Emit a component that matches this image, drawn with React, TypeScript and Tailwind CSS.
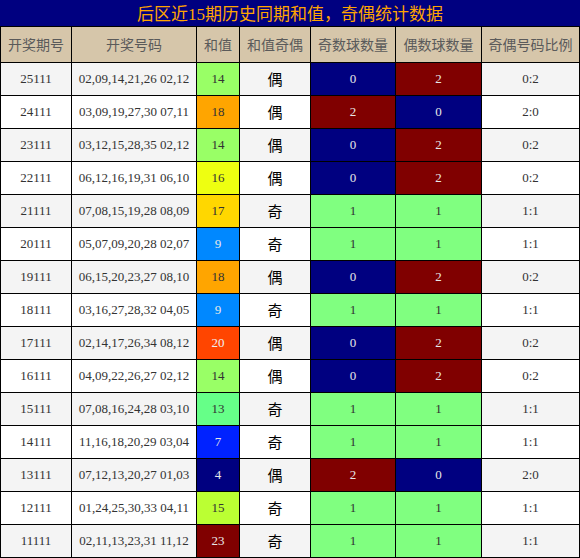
import React from "react"

type Row = [string, string, number, string, number, number, string]

const rows: Row[] = [
  ["25111", "02,09,14,21,26 02,12", 14, "偶", 0, 2, "0:2"],
  ["24111", "03,09,19,27,30 07,11", 18, "偶", 2, 0, "2:0"],
  ["23111", "03,12,15,28,35 02,12", 14, "偶", 0, 2, "0:2"],
  ["22111", "06,12,16,19,31 06,10", 16, "偶", 0, 2, "0:2"],
  ["21111", "07,08,15,19,28 08,09", 17, "奇", 1, 1, "1:1"],
  ["20111", "05,07,09,20,28 02,07", 9, "奇", 1, 1, "1:1"],
  ["19111", "06,15,20,23,27 08,10", 18, "偶", 0, 2, "0:2"],
  ["18111", "03,16,27,28,32 04,05", 9, "奇", 1, 1, "1:1"],
  ["17111", "02,14,17,26,34 08,12", 20, "偶", 0, 2, "0:2"],
  ["16111", "04,09,22,26,27 02,12", 14, "偶", 0, 2, "0:2"],
  ["15111", "07,08,16,24,28 03,10", 13, "奇", 1, 1, "1:1"],
  ["14111", "11,16,18,20,29 03,04", 7, "奇", 1, 1, "1:1"],
  ["13111", "07,12,13,20,27 01,03", 4, "偶", 2, 0, "2:0"],
  ["12111", "01,24,25,30,33 04,11", 15, "奇", 1, 1, "1:1"],
  ["11111", "02,11,13,23,31 11,12", 23, "奇", 1, 1, "1:1"],
]

// 和值 cell colours
const sumColor: Record<number, string> = {
  4: "bg-[#000080] text-[#e8e8e8]",
  7: "bg-[#0022ff] text-[#e8e8e8]",
  9: "bg-[#0088ff] text-[#e8e8e8]",
  13: "bg-[#66ff88] text-[#333]",
  14: "bg-[#99ff66] text-[#333]",
  15: "bg-[#bbff33] text-[#333]",
  16: "bg-[#eeff11] text-[#333]",
  17: "bg-[#ffd700] text-[#333]",
  18: "bg-[#ffa500] text-[#333]",
  20: "bg-[#ff4500] text-[#f0f0f0]",
  23: "bg-[#800000] text-[#e8e8e8]",
}

const countColor: Record<number, string> = {
  0: "bg-[#000080] text-[#e8e8e8]",
  1: "bg-[#80ff80] text-[#333]",
  2: "bg-[#800000] text-[#e8e8e8]",
}

const headers = ["开奖期号", "开奖号码", "和值", "和值奇偶", "奇数球数量", "偶数球数量", "奇偶号码比例"]

const serif = "font-['Liberation_Serif','Noto_Sans_CJK_SC',serif]"
const sans = "font-['Noto_Sans_CJK_SC',sans-serif]"

export default function App() {
  return (
    <div className="w-[580px] h-[558px] bg-black flex flex-col">
      {/* title */}
      <div className={`h-[26px] bg-[#000080] text-[#ffa500] text-[17px] leading-[26px] text-center ${sans}`}>
        后区近<span className={serif}>15</span>期历史同期和值，奇偶统计数据
      </div>
      <div className="mt-px px-px pb-px grid gap-px grid-cols-[70px_124px_42px_70px_84px_85px_97px] grid-rows-[35px_repeat(15,32px)]">
        {headers.map((h) => (
          <div key={h} className={`bg-[#d6c6aa] text-[#5a5a5a] text-[14px] flex items-center justify-center ${sans}`}>
            {h}
          </div>
        ))}
        {rows.map((r, i) => {
          const bg = i % 2 === 0 ? "bg-[#f4f4f4]" : "bg-white"
          return (
            <React.Fragment key={r[0]}>
              <div className={`${bg} ${serif} text-[13px] text-[#333] flex items-center justify-center`}>{r[0]}</div>
              <div className={`${bg} ${serif} text-[13px] text-[#333] flex items-center justify-center`}>{r[1]}</div>
              <div className={`${sumColor[r[2]]} ${serif} text-[13px] flex items-center justify-center`}>{r[2]}</div>
              <div className={`${bg} ${sans} text-[15px] text-black flex items-center justify-center`}>{r[3]}</div>
              <div className={`${countColor[r[4]]} ${serif} text-[13px] flex items-center justify-center`}>{r[4]}</div>
              <div className={`${countColor[r[5]]} ${serif} text-[13px] flex items-center justify-center`}>{r[5]}</div>
              <div className={`${bg} ${serif} text-[13px] text-[#333] flex items-center justify-center`}>{r[6]}</div>
            </React.Fragment>
          )
        })}
      </div>
    </div>
  )
}
